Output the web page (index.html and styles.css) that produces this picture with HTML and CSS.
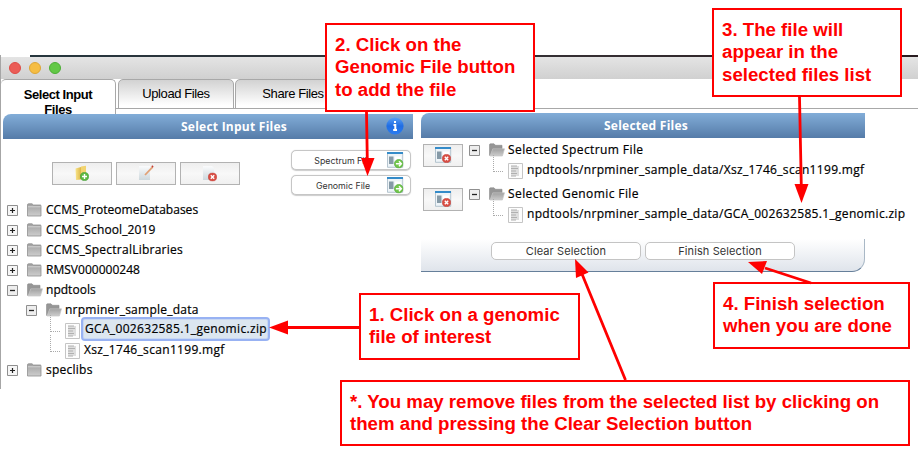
FILE: index.html
```html
<!DOCTYPE html>
<html lang="en">
<head>
<meta charset="utf-8">
<title>Select Input Files</title>
<link rel="stylesheet" href="styles.css">
</head>
<body>
<svg class="defs" width="0" height="0">
  <defs>
    <linearGradient id="gray" x1="0" y1="0" x2="0" y2="1"><stop offset="0" stop-color="#a0a0a0"/><stop offset="1" stop-color="#cdcdcd"/></linearGradient>
    <linearGradient id="yellow"><stop offset="0" stop-color="#f9e58c"/><stop offset="1" stop-color="#dcb646"/></linearGradient>
    <linearGradient id="paper" x1="0" y1="0" x2="0" y2="1"><stop offset="0" stop-color="#fafbfc"/><stop offset="1" stop-color="#cdd8dd"/></linearGradient>
    <linearGradient id="blue" x1="0" y1="0" x2="0" y2="1"><stop offset="0" stop-color="#5aa0f5"/><stop offset=".5" stop-color="#1f6de4"/><stop offset="1" stop-color="#2b7cf0"/></linearGradient>
    <symbol id="closed" viewBox="0 0 16 14"><path d="M.5 2Q.5.8 1.5.8H5L6.5 2H13.5Q14 2 14 3V13H.5Z" fill="url(#gray)" stroke="#909090" stroke-width=".8"/><path d="M1 3.8H13.6" stroke="#dedede" stroke-width=".8"/></symbol>
    <symbol id="open" viewBox="0 0 16 14"><path d="M.5 12V2Q.5.8 1.5.8H5L6.5 2.3H13V6H4L1 12.8Z" fill="#969696" stroke="#8c8c8c" stroke-width=".6"/><path d="M3.8 5.8H15.5L13.4 13H1Z" fill="url(#gray)" stroke="#c4c4c4" stroke-width=".7"/></symbol>
    <symbol id="file" viewBox="0 0 15 16"><path d="M.5.5H14.5V15.5H.5Z" fill="#fdfdfd" stroke="#c5c5c5"/><path d="M3 3H11V13H3Z" fill="#dedede"/><path d="M3 3H9M3 5.5H10M3 8H8M3 10.5H9M3 13H8" stroke="#b0b0b0" stroke-width="1.2"/></symbol>
    <symbol id="plus" viewBox="0 0 11 11"><path d="M.5.5H10.5V10.5H.5Z" fill="#f6f6f6" stroke="#8f8f8f"/><path d="M3 5.5H8M5.500 3V8" stroke="#222" stroke-width="1.2"/></symbol>
    <symbol id="minus" viewBox="0 0 11 11"><path d="M.5.5H10.500V10.5H.5Z" fill="#eee" stroke="#8f8f8f"/><path d="M3 5.500H8" stroke="#222" stroke-width="1.3"/></symbol>
    <symbol id="add" viewBox="0 0 9 9"><circle cx="4.5" cy="4.5" r="4.1" fill="#5cb944" stroke="#409a32" stroke-width=".6"/><path d="M2 4.5H7M4.5 2V7" stroke="#fff" stroke-width="1.4"/></symbol>
    <symbol id="del" viewBox="0 0 9 9"><circle cx="4.5" cy="4.5" r="4.1" fill="#d94e44" stroke="#c43a32" stroke-width=".6"/><path d="M2.8 2.8 6.2 6.2M6.2 2.8 2.8 6.2" stroke="#fff" stroke-width="1.4"/></symbol>
    <symbol id="go" viewBox="0 0 9 9"><circle cx="4.5" cy="4.5" r="4.1" fill="#72c74b" stroke="#4da336" stroke-width=".6"/><path d="M1.8 4.5H7M4.7 2.2 7 4.5 4.7 6.8" fill="none" stroke="#fff" stroke-width="1.3"/></symbol>
    <symbol id="table" viewBox="0 0 17 16"><path d="M.5.5H15.7V15.3H.5Z" fill="#eef4f8" stroke="#a4b8c4" stroke-width=".8"/><path d="M0 0H16V2H0Z" fill="#348bc9"/><path d="M2 4.5H6.5V12H2Z" fill="#869aa7"/><path d="M8 4.5H14V9H8Z" fill="#fff"/></symbol>
  </defs>
</svg>
<div class="window">
  <div class="titlebar"><i class="dot red"></i><i class="dot amber"></i><i class="dot green"></i></div>
  <div class="tabs">
    <div class="tab active">Select Input<br>Files</div>
    <div class="tab">Upload Files</div>
    <div class="tab">Share Files</div>
  </div>
  <div class="panels">
    <section class="left">
      <header class="head"><span class="head-text">Select Input Files</span>
        <svg class="info" viewBox="0 0 18 18"><circle cx="9" cy="9" r="8.6" fill="url(#blue)"/><path d="M9 4V6M7.5 8H9.300V13M7.2 13H11" fill="none" stroke="#fff" stroke-width="2"/></svg>
      </header>
      <div class="tools">
        <div class="actions">
          <div class="tool"><svg width="16" height="17" viewBox="0 0 16 17"><path d="M1.5 3.5 7 2V14.5L2 15Z" fill="url(#yellow)"/><path d="M7 1.5 12 .8V14H7Z" fill="#f2d470"/><use href="#add" x="6" y="7" width="9" height="9"/></svg></div>
          <div class="tool"><svg width="16" height="17" viewBox="0 0 16 17"><path d="M1 1H12V15H1Z" fill="url(#paper)"/><path d="M7 10 14.5 2.2" stroke="#e1a176" stroke-width="1.8"/><path d="m14 2 1-1" stroke="#c43a32" stroke-width="1.8"/></svg></div>
          <div class="tool"><svg width="16" height="17" viewBox="0 0 16 17"><path d="M1 1H10L12 3V15H1Z" fill="url(#paper)"/><use href="#del" x="6" y="7.5" width="9" height="9"/></svg></div>
        </div>
        <div class="adders">
          <div class="adder"><span>Spectrum File</span><svg width="17" height="17"><use href="#table" width="17" height="16"/><use href="#go" x="7" y="7" width="9.5" height="9.5"/></svg></div>
          <div class="adder"><span>Genomic File</span><svg width="17" height="17"><use href="#table" width="17" height="16"/><use href="#go" x="7" y="7" width="9.5" height="9.5"/></svg></div>
        </div>
      </div>
      <div class="tree">
        <div class="row"><svg class="ex"><use href="#plus"/></svg><svg class="fo"><use href="#closed"/></svg><span class="tight">CCMS_ProteomeDatabases</span></div>
        <div class="row"><svg class="ex"><use href="#plus"/></svg><svg class="fo"><use href="#closed"/></svg><span class="snug">CCMS_School_2019</span></div>
        <div class="row"><svg class="ex"><use href="#plus"/></svg><svg class="fo"><use href="#closed"/></svg><span>CCMS_SpectralLibraries</span></div>
        <div class="row"><svg class="ex"><use href="#plus"/></svg><svg class="fo"><use href="#closed"/></svg><span class="tight">RMSV000000248</span></div>
        <div class="row"><svg class="ex"><use href="#minus"/></svg><svg class="fo"><use href="#open"/></svg><span class="tight">npdtools</span></div>
        <div class="row sub"><svg class="ex"><use href="#minus"/></svg><svg class="fo"><use href="#open"/></svg><span>nrpminer_sample_data</span></div>
        <div class="row leaf"><i class="branch"></i><svg class="fi"><use href="#file"/></svg><span class="picked">GCA_002632585.1_genomic.zip</span></div>
        <div class="row leaf"><i class="branch"></i><svg class="fi"><use href="#file"/></svg><span class="wide">Xsz_1746_scan1199.mgf</span></div>
        <div class="row"><svg class="ex"><use href="#plus"/></svg><svg class="fo"><use href="#closed"/></svg><span>speclibs</span></div>
      </div>
    </section>
    <section class="right">
      <header class="head"><span class="head-text">Selected Files</span></header>
      <div class="group">
        <div class="tool small"><svg width="17" height="17"><use href="#table" width="17" height="16"/><use href="#del" x="7" y="7" width="9" height="9"/></svg></div>
        <div class="chosen">
          <div class="row"><svg class="ex"><use href="#minus"/></svg><svg class="fo"><use href="#open"/></svg><span class="wider">Selected Spectrum File</span></div>
          <div class="row leaf"><i class="branch"></i><svg class="fi"><use href="#file"/></svg><span class="wide">npdtools/nrpminer_sample_data/Xsz_1746_scan1199.mgf</span></div>
        </div>
      </div>
      <div class="group">
        <div class="tool small"><svg width="17" height="17"><use href="#table" width="17" height="16"/><use href="#del" x="7" y="7" width="9" height="9"/></svg></div>
        <div class="chosen">
          <div class="row"><svg class="ex"><use href="#minus"/></svg><svg class="fo"><use href="#open"/></svg><span class="wider">Selected Genomic File</span></div>
          <div class="row leaf"><i class="branch"></i><svg class="fi"><use href="#file"/></svg><span class="wide">npdtools/nrpminer_sample_data/GCA_002632585.1_genomic.zip</span></div>
        </div>
      </div>
      <footer class="foot"><div class="push">Clear Selection</div><div class="push">Finish Selection</div></footer>
    </section>
  </div>
</div>
<div class="note n1">1. Click on a genomic<br>file of interest</div>
<div class="note n2">2. Click on the<br>Genomic File button<br>to add the file</div>
<div class="note n3">3. The file will<br>appear in the<br>selected files list</div>
<div class="note n4">4. Finish selection<br>when you are done</div>
<div class="note n5">*. You may remove files from the selected list by clicking on<br>them and pressing the Clear Selection button</div>
<svg class="arrows" viewBox="0 0 918 453">
  <path d="M366.500 112 367.300 160M799.500 97 801.300 186M359 327.500H286M625.500 380 582 274M811 283 765 268" stroke="#f00" stroke-width="2.8"/>
  <g fill="#f00"><path d="M361 158H374.500L367.500 176Z"/><path d="M794.500 184H808.500L801.500 203Z"/><path d="M288 320.500V334.500L269 327.500Z"/><path d="M575 259 588.500 272.500 576 278Z"/><path d="M748 262 767 261 762 274Z"/></g>
</svg>
</body>
</html>
```
FILE: styles.css
```css
* { box-sizing: border-box; }
body { margin: 0; width: 918px; height: 453px; overflow: hidden; background: #fff; position: relative; font-family: "Open Sans", "Noto Sans", sans-serif; color: #000; }
.defs { position: absolute; }
svg { flex: none; display: block; }
.window { margin-top: 55px; height: 334px; position: relative; border-left: 1px solid #a6a6a6; }
.titlebar { height: 24px; display: flex; align-items: center; gap: 8px; padding-left: 8px; background: linear-gradient(90deg, #fff 29px, #26363e 29px, #352e32 600px, #281b1f) top / 100% 2px no-repeat, linear-gradient(#e6e6e6, #d0d0d0); }
.dot { width: 12px; height: 12px; border-radius: 50%; margin-top: 2px; border: 1px solid #de4c46; background: #eb5d57; }
.dot.amber { background: #f5bd43; border-color: #dda636; }
.dot.green { background: #62c846; border-color: #4cae35; }
.tabs { height: 35px; display: flex; background: linear-gradient(#a8a8a8, #a8a8a8) 0 29px / 100% 1px no-repeat; font: 13px/27px "Liberation Sans", sans-serif; letter-spacing: -.4px; }
.tab { width: 116px; height: 30px; margin-right: 1px; border: 1px solid #a8a8a8; border-radius: 5px 5px 0 0; background: linear-gradient(#d2d2d2, #fff 90%); text-align: center; white-space: nowrap; }
.tab.active { width: 115px; height: 35px; margin-right: 2px; border-width: 1px 1px 0 0; padding-top: 7px; font: bold 13px/15px "Liberation Sans", sans-serif; background: #fff; letter-spacing: -.45px; }
.panels { display: flex; align-items: flex-start; }
.left { width: 410px; margin-left: 2px; }
.right { width: 444px; margin: -1px 0 0 8px; }
.head { height: 25px; border-radius: 8px 0 0; background: linear-gradient(#82add8, #557ba8); display: flex; align-items: center; justify-content: center; position: relative; color: #fff; font-weight: 700; font-size: 12px; letter-spacing: .25px; }
.left .head-text { padding-left: 52px; }
.right .head-text { padding-left: 6px; }
.info { position: absolute; right: 9px; top: 3px; width: 18px; height: 18px; }
.tools { display: flex; justify-content: space-between; padding: 11px 2px 0 49px; height: 60px; }
.actions { display: flex; gap: 4px; padding-top: 12px; }
.tool { flex: none; width: 60px; height: 23px; border: 1px solid #b2b2b2; background: linear-gradient(#eee, #f8f8f8 50%, #f0f0f0); display: flex; align-items: center; justify-content: center; }
.adders { display: flex; flex-direction: column; gap: 5px; }
.adder { width: 120px; height: 20px; border: 1px solid #c6c6c6; border-radius: 5px; background: #fff; display: flex; align-items: center; font: 400 8.8px "Inter", sans-serif; color: #333; padding: 0 6px 0 7px; box-shadow: 0 .5px 1px #ccc; }
.adder span { flex: 1; text-align: center; white-space: nowrap; }
.row { height: 20px; display: flex; align-items: center; font-size: 12px; font-weight: 500; white-space: nowrap; letter-spacing: .24px; }
.row > span { flex: none; -webkit-text-stroke: .2px; }
.row .tight { letter-spacing: .02px; }
.row .snug { letter-spacing: .12px; }
.row .wide { letter-spacing: .32px; }
.row .wider { letter-spacing: .41px; }
.tree .row { padding-left: 4px; }
.ex { width: 11px; height: 11px; margin: 2px 9px 0 0; }
.fo { width: 16px; height: 14px; margin: 1px 3px 0 0; }
.fi { width: 15px; height: 16px; margin: 4px 4px 0 5px; }
.tree .row.sub { padding-left: 23px; }
.tree .row.leaf { padding-left: 47px; }
.branch { width: 10px; height: 17px; margin-top: -12px; border-left: 1px dotted #aaa; border-bottom: 1px dotted #aaa; }
.tree .picked { height: 24px; width: 189px; margin-left: -3px; line-height: 20px; padding-left: 2px; border: 2px solid #98b2f3; border-radius: 4px; background: #dce6f0; box-shadow: inset 0 0 0 1px #c8d7f2; letter-spacing: .33px; }
.group { height: 44px; display: flex; padding: 6px 0 0 2px; }
.tool.small { width: 40px; }
.chosen { margin: -5px 0 0 6px; }
.chosen .leaf { padding-left: 24px; }
.foot { height: 33px; margin-top: 13px; display: flex; gap: 4px; padding: 3px 0 0 70px; background: linear-gradient(#fff, #dfe4eb); border-bottom: 1px solid #667f9a; border-right: 1px solid #a9b8c6; border-radius: 0 0 13px; }
.push { width: 150px; height: 18px; border: 1px solid #c4c4c4; border-radius: 5px; background: #fff; text-align: center; font: 400 11px/16px "Inter", sans-serif; color: #333; letter-spacing: .1px; }
.note { position: absolute; border: 2px solid #f00; background: #fff; color: #f00; font: bold 18.67px/22.4px "Liberation Sans", sans-serif; white-space: nowrap; padding: 9px 8px; }
.n1 { left: 359px; top: 293px; width: 221px; height: 67px; }
.n2 { left: 325px; top: 23px; width: 210px; height: 89px; }
.n3 { left: 712px; top: 8px; width: 190px; height: 89px; }
.n4 { left: 713px; top: 282px; width: 197px; height: 67px; }
.n5 { left: 340px; top: 380px; width: 570px; height: 66px; }
.arrows { position: absolute; left: 0; top: 0; width: 918px; height: 453px; }
```
